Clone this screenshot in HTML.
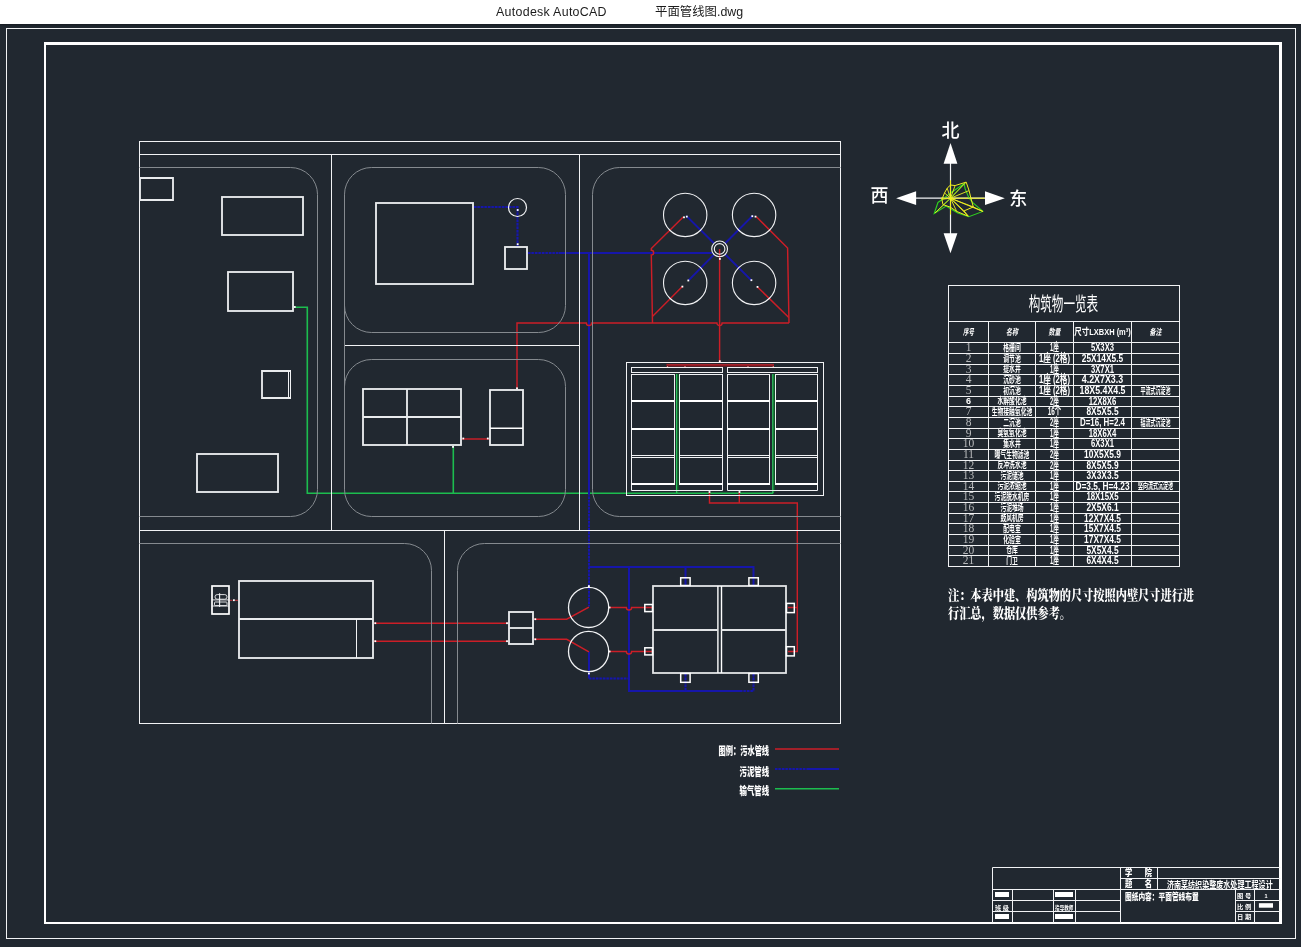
<!DOCTYPE html>
<html lang="zh"><head><meta charset="utf-8"><title>平面管线图.dwg</title>
<style>
html,body{margin:0;padding:0;background:#212830;}
body{width:1301px;height:947px;overflow:hidden;position:relative;font-family:"Liberation Sans","Noto Sans CJK SC",sans-serif;}
#hdr{position:absolute;left:0;top:0;width:1301px;height:24px;background:#fff;box-shadow:0 1px 2px #151a21;color:#1b1b1b;font-size:12.4px;line-height:24px;white-space:nowrap;}
#hdr span{position:absolute;top:0;}
svg{position:absolute;left:0;top:0;display:block;will-change:transform;}
</style></head><body>
<svg width="1301" height="947" viewBox="0 0 1301 947" shape-rendering="geometricPrecision">
<path d="M294,307 H307 V493 H773" stroke="#1cbd4e" stroke-width="1.6" fill="none" transform="translate(0.3,0.3)" />
<path d="M453,446 V493" stroke="#1cbd4e" stroke-width="1.6" fill="none" transform="translate(0.3,0.3)" />
<line x1="676.7" y1="374" x2="676.7" y2="493" stroke="#2cc45c" stroke-width="1.5" />
<line x1="678.1" y1="374" x2="678.1" y2="492" stroke="#0c5a24" stroke-width="1.2" />
<line x1="772.9" y1="374" x2="772.9" y2="493" stroke="#2cc45c" stroke-width="1.5" />
<line x1="774.3" y1="374" x2="774.3" y2="492" stroke="#0c5a24" stroke-width="1.2" />
<path d="M474,207 H517.5 V246" stroke="#1616aa" stroke-width="2" fill="none" stroke-opacity="0.28"/>
<path d="M474,207 H517.5 V246" stroke="#1616aa" stroke-width="2" fill="none" stroke-dasharray="2.4,1.1"/>
<path d="M528,253 H559" stroke="#1616aa" stroke-width="2" fill="none" stroke-opacity="0.28"/>
<path d="M528,253 H559" stroke="#1616aa" stroke-width="2" fill="none" stroke-dasharray="2.4,1.1"/>
<path d="M559,253 H712.5" stroke="#1616aa" stroke-width="2" fill="none"/>
<path d="M589,253 V493" stroke="#1616aa" stroke-width="2" fill="none"/>
<path d="M589,493 V606.5" stroke="#1616aa" stroke-width="2" fill="none" stroke-opacity="0.28"/>
<path d="M589,493 V606.5" stroke="#1616aa" stroke-width="2" fill="none" stroke-dasharray="2.4,1.1"/>
<path d="M713.92,243.27 L686.3,215.9" stroke="#1616aa" stroke-width="2" fill="none"/>
<path d="M725.25,243.23 L753,215.4" stroke="#1616aa" stroke-width="2" fill="none"/>
<path d="M713.98,254.59 L688.8,280.1" stroke="#1616aa" stroke-width="2" fill="none"/>
<path d="M725.29,254.52 L751.2,280.1" stroke="#1616aa" stroke-width="2" fill="none"/>
<path d="M589,567 H753.5 V585" stroke="#1616aa" stroke-width="2" fill="none"/>
<path d="M685.5,567 V585" stroke="#1616aa" stroke-width="2" fill="none"/>
<path d="M629,567 V691 H740" stroke="#1616aa" stroke-width="2" fill="none"/>
<path d="M740,691 H753.5 V674" stroke="#1616aa" stroke-width="2" fill="none" stroke-opacity="0.28"/>
<path d="M740,691 H753.5 V674" stroke="#1616aa" stroke-width="2" fill="none" stroke-dasharray="2.4,1.1"/>
<path d="M685.5,674 V691" stroke="#1616aa" stroke-width="2" fill="none" stroke-opacity="0.28"/>
<path d="M685.5,674 V691" stroke="#1616aa" stroke-width="2" fill="none" stroke-dasharray="2.4,1.1"/>
<path d="M589,651.8 V678.5" stroke="#1616aa" stroke-width="2" fill="none"/>
<path d="M589,678.5 H629" stroke="#1616aa" stroke-width="2" fill="none" stroke-opacity="0.28"/>
<path d="M589,678.5 H629" stroke="#1616aa" stroke-width="2" fill="none" stroke-dasharray="2.4,1.1"/>
<path d="M517,389 V323 H586.4 A2.6,2.6 0 0 0 591.6,323 H716.9 A2.6,2.6 0 0 0 722.1,323 H789" stroke="#cc1e27" stroke-width="1.45" fill="none" stroke-linejoin="miter" />
<path d="M683.2,216.9 L651.3,248.6 V250.3 A2.3,2.3 0 0 1 651.3,255 L652.5,323" stroke="#cc1e27" stroke-width="1.45" fill="none" stroke-linejoin="miter" />
<path d="M756.1,216.5 L787.6,248 L789,323" stroke="#cc1e27" stroke-width="1.45" fill="none" stroke-linejoin="miter" />
<path d="M682.6,286.3 L652.4,316.5" stroke="#cc1e27" stroke-width="1.45" fill="none" stroke-linejoin="miter" />
<path d="M757.4,286.9 L788.8,317.5" stroke="#cc1e27" stroke-width="1.45" fill="none" stroke-linejoin="miter" />
<path d="M719.6,249 V362" stroke="#cc1e27" stroke-width="1.45" fill="none" stroke-linejoin="miter" />
<path d="M462,439 H489" stroke="#cc1e27" stroke-width="1.45" fill="none" stroke-linejoin="miter" />
<line x1="666.5" y1="365.3" x2="774" y2="365.3" stroke="#8e1a22" stroke-width="2.4" />
<line x1="666.5" y1="364.4" x2="774" y2="364.4" stroke="#b02a32" stroke-width="0.8" />
<line x1="667.5" y1="366" x2="667.5" y2="367.6" stroke="#d88" stroke-width="1.2" />
<line x1="685" y1="366" x2="685" y2="367.6" stroke="#d88" stroke-width="1.2" />
<line x1="748" y1="366" x2="748" y2="367.6" stroke="#d88" stroke-width="1.2" />
<line x1="773.3" y1="366" x2="773.3" y2="367.6" stroke="#d88" stroke-width="1.2" />
<path d="M709.5,492 V503 H797.3 V651.5 H788" stroke="#cc1e27" stroke-width="1.45" fill="none" stroke-linejoin="miter" />
<path d="M739.3,492 V503" stroke="#cc1e27" stroke-width="1.45" fill="none" stroke-linejoin="miter" />
<path d="M788,607.5 H797.3" stroke="#cc1e27" stroke-width="1.45" fill="none" stroke-linejoin="miter" />
<line x1="229.5" y1="600.4" x2="238" y2="600.4" stroke="#a0343c" stroke-width="1.4" stroke-dasharray="3,2.5"/>
<path d="M374,623.2 H508" stroke="#cc1e27" stroke-width="1.45" fill="none" stroke-linejoin="miter" />
<path d="M374,641.2 H508" stroke="#cc1e27" stroke-width="1.45" fill="none" stroke-linejoin="miter" />
<path d="M534,619.2 H566.7 L588.9,607.2" stroke="#cc1e27" stroke-width="1.45" fill="none" stroke-linejoin="miter" />
<path d="M534,639.3 H566.7 L588.9,651.8" stroke="#cc1e27" stroke-width="1.45" fill="none" stroke-linejoin="miter" />
<path d="M609,607.5 H626.4 A2.6,2.6 0 0 0 631.6,607.5 H652" stroke="#cc1e27" stroke-width="1.45" fill="none" stroke-linejoin="miter" />
<path d="M609,651.5 H626.4 A2.6,2.6 0 0 0 631.6,651.5 H652" stroke="#cc1e27" stroke-width="1.45" fill="none" stroke-linejoin="miter" />
<rect x="6.5" y="28.5" width="1289.0" height="910.0" stroke="#f1f2f4" stroke-width="1" fill="none" />
<line x1="44" y1="43.5" x2="1282" y2="43.5" stroke="#ffffff" stroke-width="3" />
<line x1="1280.5" y1="42" x2="1280.5" y2="924" stroke="#ffffff" stroke-width="3" />
<line x1="45" y1="42" x2="45" y2="924" stroke="#ffffff" stroke-width="2" />
<line x1="44" y1="923" x2="1282" y2="923" stroke="#ffffff" stroke-width="2" />
<rect x="139.5" y="141.5" width="701.0" height="582.0" stroke="#f1f2f4" stroke-width="1" fill="none" />
<line x1="139.5" y1="154.5" x2="840.5" y2="154.5" stroke="#f1f2f4" stroke-width="1" />
<line x1="139.5" y1="530.5" x2="840.5" y2="530.5" stroke="#f1f2f4" stroke-width="1" />
<line x1="331.5" y1="154.5" x2="331.5" y2="530.5" stroke="#f1f2f4" stroke-width="1" />
<line x1="579.5" y1="154.5" x2="579.5" y2="530.5" stroke="#f1f2f4" stroke-width="1" />
<line x1="344.5" y1="345.5" x2="579.5" y2="345.5" stroke="#f1f2f4" stroke-width="1" />
<line x1="444.5" y1="530.5" x2="444.5" y2="723.5" stroke="#f1f2f4" stroke-width="1" />
<path d="M139.5,167.5 H290.5 A27,27 0 0 1 317.5,194.5 V489.5 A27,27 0 0 1 290.5,516.5 H139.5" stroke="#858a8f" stroke-width="1" fill="none" />
<path d="M371.5,167.5 H538.5 A27,27 0 0 1 565.5,194.5 V305.5 A27,27 0 0 1 538.5,332.5 H371.5 A27,27 0 0 1 344.5,305.5 V194.5 A27,27 0 0 1 371.5,167.5 Z" stroke="#858a8f" stroke-width="1" fill="none" />
<path d="M371.5,359.5 H538.5 A27,27 0 0 1 565.5,386.5 V489.5 A27,27 0 0 1 538.5,516.5 H371.5 A27,27 0 0 1 344.5,489.5 V386.5 A27,27 0 0 1 371.5,359.5 Z" stroke="#858a8f" stroke-width="1" fill="none" />
<line x1="344.5" y1="194.5" x2="344.5" y2="489.5" stroke="#858a8f" stroke-width="1" />
<path d="M840.5,167.5 H619.5 A27,27 0 0 0 592.5,194.5 V489.5 A27,27 0 0 0 619.5,516.5 H840.5" stroke="#858a8f" stroke-width="1" fill="none" />
<path d="M139.5,543.5 H404.5 A27,27 0 0 1 431.5,570.5 V723.5" stroke="#858a8f" stroke-width="1" fill="none" />
<path d="M840.5,543.5 H484.5 A27,27 0 0 0 457.5,570.5 V723.5" stroke="#858a8f" stroke-width="1" fill="none" />
<path d="M140,178 H173 V200 H140 Z" stroke="#e9ebed" stroke-width="1.85" fill="none" />
<rect x="222" y="197" width="81" height="38" stroke="#e9ebed" stroke-width="1.85" fill="none" />
<rect x="228" y="272" width="65" height="39" stroke="#e9ebed" stroke-width="1.85" fill="none" />
<path d="M290,371 H262 V398 H290" stroke="#e9ebed" stroke-width="1.85" fill="none" />
<line x1="290.5" y1="370" x2="290.5" y2="399" stroke="#f1f2f4" stroke-width="1" />
<line x1="288.5" y1="371" x2="288.5" y2="398" stroke="#f1f2f4" stroke-width="1" />
<rect x="197" y="454" width="81" height="38" stroke="#e9ebed" stroke-width="1.85" fill="none" />
<rect x="376" y="203" width="97" height="81" stroke="#e9ebed" stroke-width="1.85" fill="none" />
<circle cx="517.5" cy="207.5" r="9" stroke="#f1f2f4" stroke-width="1.2" fill="none"/>
<rect x="505" y="247" width="22" height="22" stroke="#e9ebed" stroke-width="1.85" fill="none" />
<rect x="363" y="389" width="98" height="56" stroke="#e9ebed" stroke-width="1.85" fill="none" />
<line x1="407" y1="389" x2="407" y2="445" stroke="#e9ebed" stroke-width="1.85" />
<line x1="363" y1="417" x2="461" y2="417" stroke="#e9ebed" stroke-width="1.85" />
<rect x="490" y="390" width="33" height="55" stroke="#e9ebed" stroke-width="1.85" fill="none" />
<line x1="490" y1="428.2" x2="523" y2="428.2" stroke="#ffffff" stroke-width="1.5" />
<circle cx="685.2" cy="214.9" r="21.7" stroke="#f1f2f4" stroke-width="1.1" fill="none"/>
<circle cx="685.2" cy="282.9" r="21.7" stroke="#f1f2f4" stroke-width="1.1" fill="none"/>
<circle cx="754.1" cy="214.9" r="21.7" stroke="#f1f2f4" stroke-width="1.1" fill="none"/>
<circle cx="754.1" cy="282.9" r="21.7" stroke="#f1f2f4" stroke-width="1.1" fill="none"/>
<rect x="626.5" y="362.5" width="197.0" height="133.0" stroke="#f1f2f4" stroke-width="1" fill="none" />
<rect x="631.5" y="367.5" width="91.0" height="5.0" stroke="#f1f2f4" stroke-width="1" fill="none" />
<path d="M631.5,484 V490.5 H722.5 V484" stroke="#f1f2f4" stroke-width="1" fill="none" />
<rect x="631.5" y="374.5" width="43.0" height="109.5" stroke="#f1f2f4" stroke-width="1" fill="none" />
<line x1="631.5" y1="401" x2="674.5" y2="401" stroke="#ffffff" stroke-width="2" />
<line x1="631.5" y1="429" x2="674.5" y2="429" stroke="#ffffff" stroke-width="2" />
<line x1="631.5" y1="455.5" x2="674.5" y2="455.5" stroke="#f1f2f4" stroke-width="1" />
<line x1="631.5" y1="457.5" x2="674.5" y2="457.5" stroke="#f1f2f4" stroke-width="1" />
<line x1="631.0" y1="484" x2="675.0" y2="484" stroke="#ffffff" stroke-width="2" />
<rect x="679.5" y="374.5" width="43.0" height="109.5" stroke="#f1f2f4" stroke-width="1" fill="none" />
<line x1="679.5" y1="401" x2="722.5" y2="401" stroke="#ffffff" stroke-width="2" />
<line x1="679.5" y1="429" x2="722.5" y2="429" stroke="#ffffff" stroke-width="2" />
<line x1="679.5" y1="455.5" x2="722.5" y2="455.5" stroke="#f1f2f4" stroke-width="1" />
<line x1="679.5" y1="457.5" x2="722.5" y2="457.5" stroke="#f1f2f4" stroke-width="1" />
<line x1="679.0" y1="484" x2="723.0" y2="484" stroke="#ffffff" stroke-width="2" />
<rect x="727.5" y="367.5" width="90.0" height="5.0" stroke="#f1f2f4" stroke-width="1" fill="none" />
<path d="M727.5,484 V490.5 H817.5 V484" stroke="#f1f2f4" stroke-width="1" fill="none" />
<rect x="727.5" y="374.5" width="42.0" height="109.5" stroke="#f1f2f4" stroke-width="1" fill="none" />
<line x1="727.5" y1="401" x2="769.5" y2="401" stroke="#ffffff" stroke-width="2" />
<line x1="727.5" y1="429" x2="769.5" y2="429" stroke="#ffffff" stroke-width="2" />
<line x1="727.5" y1="455.5" x2="769.5" y2="455.5" stroke="#f1f2f4" stroke-width="1" />
<line x1="727.5" y1="457.5" x2="769.5" y2="457.5" stroke="#f1f2f4" stroke-width="1" />
<line x1="727.0" y1="484" x2="770.0" y2="484" stroke="#ffffff" stroke-width="2" />
<rect x="775.5" y="374.5" width="42.0" height="109.5" stroke="#f1f2f4" stroke-width="1" fill="none" />
<line x1="775.5" y1="401" x2="817.5" y2="401" stroke="#ffffff" stroke-width="2" />
<line x1="775.5" y1="429" x2="817.5" y2="429" stroke="#ffffff" stroke-width="2" />
<line x1="775.5" y1="455.5" x2="817.5" y2="455.5" stroke="#f1f2f4" stroke-width="1" />
<line x1="775.5" y1="457.5" x2="817.5" y2="457.5" stroke="#f1f2f4" stroke-width="1" />
<line x1="775.0" y1="484" x2="818.0" y2="484" stroke="#ffffff" stroke-width="2" />
<rect x="239" y="581" width="134" height="77" stroke="#e9ebed" stroke-width="1.85" fill="none" />
<line x1="239" y1="619" x2="373" y2="619" stroke="#e9ebed" stroke-width="1.85" />
<line x1="356.5" y1="619" x2="356.5" y2="658" stroke="#f1f2f4" stroke-width="1" />
<rect x="212" y="586" width="17" height="28" stroke="#ffffff" stroke-width="1.7" fill="none" />
<rect x="215" y="594.6" width="12" height="4.6" stroke="#f1f2f4" stroke-width="0.9" fill="none" rx="2.2"/>
<rect x="214.5" y="602" width="12.5" height="3.6" stroke="#f1f2f4" stroke-width="0.9" fill="none" rx="0.8"/>
<line x1="212" y1="599.9" x2="229" y2="599.9" stroke="#f1f2f4" stroke-width="0.9" />
<line x1="212" y1="606" x2="229" y2="606" stroke="#f1f2f4" stroke-width="0.9" />
<line x1="219.6" y1="593.3" x2="219.6" y2="607" stroke="#f1f2f4" stroke-width="1.1" />
<rect x="509" y="612" width="24" height="32" stroke="#e9ebed" stroke-width="1.85" fill="none" />
<line x1="509" y1="628" x2="533" y2="628" stroke="#e9ebed" stroke-width="1.85" />
<circle cx="588.6" cy="607.4" r="20.1" stroke="#f1f2f4" stroke-width="1.3" fill="none"/>
<circle cx="588.6" cy="651.5" r="20.1" stroke="#f1f2f4" stroke-width="1.3" fill="none"/>
<rect x="653" y="586" width="133" height="87" stroke="#e2e4e6" stroke-width="1.8" fill="none" />
<line x1="717.9" y1="586" x2="717.9" y2="673" stroke="#ffffff" stroke-width="1.4" />
<line x1="721.5" y1="586" x2="721.5" y2="673" stroke="#ffffff" stroke-width="1.4" />
<line x1="653" y1="630" x2="717.9" y2="630" stroke="#e2e4e6" stroke-width="1.8" />
<line x1="721.5" y1="630" x2="786" y2="630" stroke="#e2e4e6" stroke-width="1.8" />
<rect x="680.6999999999999" y="577.8" width="9.4" height="7.7" stroke="#ffffff" stroke-width="1.5" fill="none" />
<rect x="680.6999999999999" y="673.5" width="9.4" height="8.8" stroke="#ffffff" stroke-width="1.5" fill="none" />
<rect x="748.9" y="577.8" width="9.4" height="7.7" stroke="#ffffff" stroke-width="1.5" fill="none" />
<rect x="748.9" y="673.5" width="9.4" height="8.8" stroke="#ffffff" stroke-width="1.5" fill="none" />
<rect x="644.8" y="604.5" width="7.7" height="7.1" stroke="#ffffff" stroke-width="1.5" fill="none" />
<rect x="786.5" y="603.4" width="7.8" height="9.2" stroke="#ffffff" stroke-width="1.5" fill="none" />
<rect x="644.8" y="647.8" width="7.7" height="7.1" stroke="#ffffff" stroke-width="1.5" fill="none" />
<rect x="786.5" y="646.6999999999999" width="7.8" height="9.2" stroke="#ffffff" stroke-width="1.5" fill="none" />
<line x1="950.5" y1="160" x2="950.5" y2="236" stroke="#f1f2f4" stroke-width="1.2" />
<line x1="914" y1="198.2" x2="987" y2="198.2" stroke="#f1f2f4" stroke-width="1.2" />
<polygon points="950.5,143.1 943.6,163.8 957.4,163.8" fill="#ffffff" stroke="none" stroke-width="0"/>
<polygon points="950.5,253.2 943.6,233.2 957.4,233.2" fill="#ffffff" stroke="none" stroke-width="0"/>
<polygon points="896.1,198.2 916.1,191.3 916.1,205.1" fill="#ffffff" stroke="none" stroke-width="0"/>
<polygon points="1004.8,198.2 985,191.3 985,205.1" fill="#ffffff" stroke="none" stroke-width="0"/>
<path d="M934.24,213.54 L937.94,202.46 L941.9,199.82 L950.5,192.95 L964.07,183.71 L965.13,188.73 L968.82,197.7 L972.52,202.46 L982.81,211.43 L968.82,216.71 L957.73,213.01 L950.5,208.79 L946.12,206.15 Z" stroke="#30d020" stroke-width="1.1" fill="none" />
<line x1="934.24" y1="213.54" x2="950.5" y2="198.23" stroke="#30d020" stroke-width="1.0" />
<line x1="950.5" y1="198.23" x2="964.07" y2="183.71" stroke="#30d020" stroke-width="1.0" />
<path d="M950.5,185.03 L955.1,185.56 L966.18,182.13 L969.09,190.58 L970.93,198.23 L973.31,206.94 L964.07,210.9 L968.29,216.18 L956.68,211.43 L950.5,207.21 L942.95,204.57 L941.9,199.29 L944.54,192.95 L947.18,188.2 Z" stroke="#f0f020" stroke-width="1.0" fill="none" />
<line x1="950.5" y1="198.23" x2="966.18" y2="182.13" stroke="#f0f020" stroke-width="0.9" />
<line x1="950.5" y1="198.23" x2="969.09" y2="190.58" stroke="#f0f020" stroke-width="0.9" />
<line x1="950.5" y1="198.23" x2="973.31" y2="206.94" stroke="#f0f020" stroke-width="0.9" />
<line x1="950.5" y1="198.23" x2="982.81" y2="211.43" stroke="#f0f020" stroke-width="0.9" />
<line x1="950.5" y1="198.23" x2="968.29" y2="216.18" stroke="#f0f020" stroke-width="0.9" />
<line x1="950.5" y1="198.23" x2="956.68" y2="211.43" stroke="#f0f020" stroke-width="0.9" />
<line x1="950.5" y1="198.23" x2="935.03" y2="213.01" stroke="#f0f020" stroke-width="0.9" />
<line x1="950.5" y1="198.23" x2="941.9" y2="199.29" stroke="#f0f020" stroke-width="0.9" />
<line x1="950.5" y1="198.23" x2="944.54" y2="192.95" stroke="#f0f020" stroke-width="0.9" />
<line x1="950.5" y1="198.23" x2="947.18" y2="188.2" stroke="#f0f020" stroke-width="0.9" />
<line x1="950.5" y1="198.23" x2="955.1" y2="185.56" stroke="#f0f020" stroke-width="0.9" />
<line x1="950.5" y1="198.23" x2="964.07" y2="210.9" stroke="#f0f020" stroke-width="0.9" />
<line x1="940.84" y1="198.23" x2="984.66" y2="198.23" stroke="#f0f020" stroke-width="1.0" />
<line x1="950.5" y1="180.28" x2="950.5" y2="214.6" stroke="#f0f020" stroke-width="1.0" />
<line x1="973.31" y1="206.94" x2="982.81" y2="211.43" stroke="#f0f020" stroke-width="1.0" />
<text x="950.5" y="137.38" font-size="18" font-weight="500" font-family='"Liberation Sans","Noto Sans CJK SC",sans-serif' fill="#ffffff" text-anchor="middle" >北</text>
<text x="879.6" y="202.38" font-size="18" font-weight="500" font-family='"Liberation Sans","Noto Sans CJK SC",sans-serif' fill="#ffffff" text-anchor="middle" >西</text>
<text x="1018.2" y="204.78" font-size="18" font-weight="500" font-family='"Liberation Sans","Noto Sans CJK SC",sans-serif' fill="#ffffff" text-anchor="middle" >东</text>
<rect x="948.5" y="285.5" width="231.0" height="281.0" stroke="#f1f2f4" stroke-width="1" fill="none" />
<line x1="948.5" y1="321.5" x2="1179.5" y2="321.5" stroke="#f1f2f4" stroke-width="1" />
<line x1="948.5" y1="342.5" x2="1179.5" y2="342.5" stroke="#f1f2f4" stroke-width="1" />
<line x1="948.5" y1="353.5" x2="1179.5" y2="353.5" stroke="#f1f2f4" stroke-width="1" />
<line x1="948.5" y1="364.5" x2="1179.5" y2="364.5" stroke="#f1f2f4" stroke-width="1" />
<line x1="948.5" y1="374.5" x2="1179.5" y2="374.5" stroke="#f1f2f4" stroke-width="1" />
<line x1="948.5" y1="385.5" x2="1179.5" y2="385.5" stroke="#f1f2f4" stroke-width="1" />
<line x1="948.5" y1="396.5" x2="1179.5" y2="396.5" stroke="#f1f2f4" stroke-width="1" />
<line x1="948.5" y1="406.5" x2="1179.5" y2="406.5" stroke="#f1f2f4" stroke-width="1" />
<line x1="948.5" y1="417.5" x2="1179.5" y2="417.5" stroke="#f1f2f4" stroke-width="1" />
<line x1="948.5" y1="428.5" x2="1179.5" y2="428.5" stroke="#f1f2f4" stroke-width="1" />
<line x1="948.5" y1="438.5" x2="1179.5" y2="438.5" stroke="#f1f2f4" stroke-width="1" />
<line x1="948.5" y1="449.5" x2="1179.5" y2="449.5" stroke="#f1f2f4" stroke-width="1" />
<line x1="948.5" y1="460.5" x2="1179.5" y2="460.5" stroke="#f1f2f4" stroke-width="1" />
<line x1="948.5" y1="470.5" x2="1179.5" y2="470.5" stroke="#f1f2f4" stroke-width="1" />
<line x1="948.5" y1="481.5" x2="1179.5" y2="481.5" stroke="#f1f2f4" stroke-width="1" />
<line x1="948.5" y1="491.5" x2="1179.5" y2="491.5" stroke="#f1f2f4" stroke-width="1" />
<line x1="948.5" y1="502.5" x2="1179.5" y2="502.5" stroke="#f1f2f4" stroke-width="1" />
<line x1="948.5" y1="513.5" x2="1179.5" y2="513.5" stroke="#f1f2f4" stroke-width="1" />
<line x1="948.5" y1="523.5" x2="1179.5" y2="523.5" stroke="#f1f2f4" stroke-width="1" />
<line x1="948.5" y1="534.5" x2="1179.5" y2="534.5" stroke="#f1f2f4" stroke-width="1" />
<line x1="948.5" y1="545.5" x2="1179.5" y2="545.5" stroke="#f1f2f4" stroke-width="1" />
<line x1="948.5" y1="555.5" x2="1179.5" y2="555.5" stroke="#f1f2f4" stroke-width="1" />
<line x1="988.5" y1="321.5" x2="988.5" y2="566.5" stroke="#f1f2f4" stroke-width="1" />
<line x1="1035.5" y1="321.5" x2="1035.5" y2="566.5" stroke="#f1f2f4" stroke-width="1" />
<line x1="1073.5" y1="321.5" x2="1073.5" y2="566.5" stroke="#f1f2f4" stroke-width="1" />
<line x1="1131.5" y1="321.5" x2="1131.5" y2="566.5" stroke="#f1f2f4" stroke-width="1" />
<text x="1063.4" y="310.92" font-size="19.5" font-weight="400" font-family='"Liberation Sans","Noto Sans CJK SC",sans-serif' fill="#ffffff" text-anchor="middle" textLength="69.5" lengthAdjust="spacingAndGlyphs" >构筑物一览表</text>
<text x="968.5" y="335.1" font-size="8.6" font-weight="bold" font-family='"Liberation Sans","Noto Sans CJK SC",sans-serif' fill="#ffffff" text-anchor="middle" textLength="11" lengthAdjust="spacingAndGlyphs" font-style="italic">序号</text>
<text x="1012.0" y="335.1" font-size="8.6" font-weight="bold" font-family='"Liberation Sans","Noto Sans CJK SC",sans-serif' fill="#ffffff" text-anchor="middle" textLength="12" lengthAdjust="spacingAndGlyphs" font-style="italic">名称</text>
<text x="1054.5" y="335.1" font-size="8.6" font-weight="bold" font-family='"Liberation Sans","Noto Sans CJK SC",sans-serif' fill="#ffffff" text-anchor="middle" textLength="12" lengthAdjust="spacingAndGlyphs" font-style="italic">数量</text>
<text x="1102.5" y="335.42" font-size="9.5" font-weight="bold" font-family='"Liberation Sans","Noto Sans CJK SC",sans-serif' fill="#ffffff" text-anchor="middle" textLength="56.5" lengthAdjust="spacingAndGlyphs" >尺寸LXBXH (m³)</text>
<text x="1155.5" y="335.1" font-size="8.6" font-weight="bold" font-family='"Liberation Sans","Noto Sans CJK SC",sans-serif' fill="#ffffff" text-anchor="middle" textLength="12" lengthAdjust="spacingAndGlyphs" font-style="italic">备注</text>
<text x="968.5" y="351.1" font-size="11.5" font-weight="normal" font-family='"Liberation Serif","Noto Serif CJK SC",serif' fill="#b8babc" text-anchor="middle" >1</text>
<text x="1012.0" y="350.74" font-size="9" font-weight="bold" font-family='"Liberation Sans","Noto Sans CJK SC",sans-serif' fill="#ffffff" text-anchor="middle" textLength="17.4" lengthAdjust="spacingAndGlyphs" >格栅间</text>
<text x="1054.5" y="351.39" font-size="10.8" font-weight="bold" font-family='"Liberation Sans","Noto Sans CJK SC",sans-serif' fill="#ffffff" text-anchor="middle" textLength="8.8" lengthAdjust="spacingAndGlyphs" >1座</text>
<text x="1102.5" y="351.1" font-size="10" font-weight="bold" font-family='"Liberation Sans","Noto Sans CJK SC",sans-serif' fill="#ffffff" text-anchor="middle" textLength="23.0" lengthAdjust="spacingAndGlyphs" >5X3X3</text>
<text x="968.5" y="362.1" font-size="11.5" font-weight="normal" font-family='"Liberation Serif","Noto Serif CJK SC",serif' fill="#b8babc" text-anchor="middle" >2</text>
<text x="1012.0" y="361.74" font-size="9" font-weight="bold" font-family='"Liberation Sans","Noto Sans CJK SC",sans-serif' fill="#ffffff" text-anchor="middle" textLength="17.4" lengthAdjust="spacingAndGlyphs" >调节池</text>
<text x="1054.5" y="362.39" font-size="10.8" font-weight="bold" font-family='"Liberation Sans","Noto Sans CJK SC",sans-serif' fill="#ffffff" text-anchor="middle" textLength="31" lengthAdjust="spacingAndGlyphs" >1座 (2格)</text>
<text x="1102.5" y="362.1" font-size="10" font-weight="bold" font-family='"Liberation Sans","Noto Sans CJK SC",sans-serif' fill="#ffffff" text-anchor="middle" textLength="41.4" lengthAdjust="spacingAndGlyphs" >25X14X5.5</text>
<text x="968.5" y="372.6" font-size="11.5" font-weight="normal" font-family='"Liberation Serif","Noto Serif CJK SC",serif' fill="#b8babc" text-anchor="middle" >3</text>
<text x="1012.0" y="372.24" font-size="9" font-weight="bold" font-family='"Liberation Sans","Noto Sans CJK SC",sans-serif' fill="#ffffff" text-anchor="middle" textLength="17.4" lengthAdjust="spacingAndGlyphs" >提水井</text>
<text x="1054.5" y="372.89" font-size="10.8" font-weight="bold" font-family='"Liberation Sans","Noto Sans CJK SC",sans-serif' fill="#ffffff" text-anchor="middle" textLength="8.8" lengthAdjust="spacingAndGlyphs" >1座</text>
<text x="1102.5" y="372.6" font-size="10" font-weight="bold" font-family='"Liberation Sans","Noto Sans CJK SC",sans-serif' fill="#ffffff" text-anchor="middle" textLength="23.0" lengthAdjust="spacingAndGlyphs" >3X7X1</text>
<text x="968.5" y="383.1" font-size="11.5" font-weight="normal" font-family='"Liberation Serif","Noto Serif CJK SC",serif' fill="#b8babc" text-anchor="middle" >4</text>
<text x="1012.0" y="382.74" font-size="9" font-weight="bold" font-family='"Liberation Sans","Noto Sans CJK SC",sans-serif' fill="#ffffff" text-anchor="middle" textLength="17.4" lengthAdjust="spacingAndGlyphs" >沉砂池</text>
<text x="1054.5" y="383.39" font-size="10.8" font-weight="bold" font-family='"Liberation Sans","Noto Sans CJK SC",sans-serif' fill="#ffffff" text-anchor="middle" textLength="31" lengthAdjust="spacingAndGlyphs" >1座 (2格)</text>
<text x="1102.5" y="383.1" font-size="10" font-weight="bold" font-family='"Liberation Sans","Noto Sans CJK SC",sans-serif' fill="#ffffff" text-anchor="middle" textLength="41.4" lengthAdjust="spacingAndGlyphs" >4.2X7X3.3</text>
<text x="968.5" y="394.1" font-size="11.5" font-weight="normal" font-family='"Liberation Serif","Noto Serif CJK SC",serif' fill="#b8babc" text-anchor="middle" >5</text>
<text x="1012.0" y="393.74" font-size="9" font-weight="bold" font-family='"Liberation Sans","Noto Sans CJK SC",sans-serif' fill="#ffffff" text-anchor="middle" textLength="17.4" lengthAdjust="spacingAndGlyphs" >初沉池</text>
<text x="1054.5" y="394.39" font-size="10.8" font-weight="bold" font-family='"Liberation Sans","Noto Sans CJK SC",sans-serif' fill="#ffffff" text-anchor="middle" textLength="31" lengthAdjust="spacingAndGlyphs" >1座 (2格)</text>
<text x="1102.5" y="394.1" font-size="10" font-weight="bold" font-family='"Liberation Sans","Noto Sans CJK SC",sans-serif' fill="#ffffff" text-anchor="middle" textLength="46.0" lengthAdjust="spacingAndGlyphs" >18X5.4X4.5</text>
<text x="1155.5" y="393.67" font-size="8.8" font-weight="bold" font-family='"Liberation Sans","Noto Sans CJK SC",sans-serif' fill="#ffffff" text-anchor="middle" textLength="30.0" lengthAdjust="spacingAndGlyphs" >平流式沉淀池</text>
<text x="968.5" y="404.24" font-size="9" font-weight="bold" font-family='"Liberation Sans","Noto Sans CJK SC",sans-serif' fill="#ffffff" text-anchor="middle" >6</text>
<text x="1012.0" y="404.24" font-size="9" font-weight="bold" font-family='"Liberation Sans","Noto Sans CJK SC",sans-serif' fill="#ffffff" text-anchor="middle" textLength="29.0" lengthAdjust="spacingAndGlyphs" >水解酸化池</text>
<text x="1054.5" y="404.89" font-size="10.8" font-weight="bold" font-family='"Liberation Sans","Noto Sans CJK SC",sans-serif' fill="#ffffff" text-anchor="middle" textLength="8.8" lengthAdjust="spacingAndGlyphs" >2座</text>
<text x="1102.5" y="404.6" font-size="10" font-weight="bold" font-family='"Liberation Sans","Noto Sans CJK SC",sans-serif' fill="#ffffff" text-anchor="middle" textLength="27.6" lengthAdjust="spacingAndGlyphs" >12X8X6</text>
<text x="968.5" y="415.1" font-size="11.5" font-weight="normal" font-family='"Liberation Serif","Noto Serif CJK SC",serif' fill="#b8babc" text-anchor="middle" >7</text>
<text x="1012.0" y="414.74" font-size="9" font-weight="bold" font-family='"Liberation Sans","Noto Sans CJK SC",sans-serif' fill="#ffffff" text-anchor="middle" textLength="40.6" lengthAdjust="spacingAndGlyphs" >生物接触氧化池</text>
<text x="1054.5" y="415.39" font-size="10.8" font-weight="bold" font-family='"Liberation Sans","Noto Sans CJK SC",sans-serif' fill="#ffffff" text-anchor="middle" textLength="13.5" lengthAdjust="spacingAndGlyphs" >16个</text>
<text x="1102.5" y="415.1" font-size="10" font-weight="bold" font-family='"Liberation Sans","Noto Sans CJK SC",sans-serif' fill="#ffffff" text-anchor="middle" textLength="32.2" lengthAdjust="spacingAndGlyphs" >8X5X5.5</text>
<text x="968.5" y="426.1" font-size="11.5" font-weight="normal" font-family='"Liberation Serif","Noto Serif CJK SC",serif' fill="#b8babc" text-anchor="middle" >8</text>
<text x="1012.0" y="425.74" font-size="9" font-weight="bold" font-family='"Liberation Sans","Noto Sans CJK SC",sans-serif' fill="#ffffff" text-anchor="middle" textLength="17.4" lengthAdjust="spacingAndGlyphs" >二沉池</text>
<text x="1054.5" y="426.39" font-size="10.8" font-weight="bold" font-family='"Liberation Sans","Noto Sans CJK SC",sans-serif' fill="#ffffff" text-anchor="middle" textLength="8.8" lengthAdjust="spacingAndGlyphs" >2座</text>
<text x="1102.5" y="426.1" font-size="10" font-weight="bold" font-family='"Liberation Sans","Noto Sans CJK SC",sans-serif' fill="#ffffff" text-anchor="middle" textLength="45" lengthAdjust="spacingAndGlyphs" >D=16, H=2.4</text>
<text x="1155.5" y="425.67" font-size="8.8" font-weight="bold" font-family='"Liberation Sans","Noto Sans CJK SC",sans-serif' fill="#ffffff" text-anchor="middle" textLength="30.0" lengthAdjust="spacingAndGlyphs" >辐流式沉淀池</text>
<text x="968.5" y="436.6" font-size="11.5" font-weight="normal" font-family='"Liberation Serif","Noto Serif CJK SC",serif' fill="#b8babc" text-anchor="middle" >9</text>
<text x="1012.0" y="436.24" font-size="9" font-weight="bold" font-family='"Liberation Sans","Noto Sans CJK SC",sans-serif' fill="#ffffff" text-anchor="middle" textLength="29.0" lengthAdjust="spacingAndGlyphs" >臭氧氧化池</text>
<text x="1054.5" y="436.89" font-size="10.8" font-weight="bold" font-family='"Liberation Sans","Noto Sans CJK SC",sans-serif' fill="#ffffff" text-anchor="middle" textLength="8.8" lengthAdjust="spacingAndGlyphs" >1座</text>
<text x="1102.5" y="436.6" font-size="10" font-weight="bold" font-family='"Liberation Sans","Noto Sans CJK SC",sans-serif' fill="#ffffff" text-anchor="middle" textLength="27.6" lengthAdjust="spacingAndGlyphs" >18X6X4</text>
<text x="968.5" y="447.1" font-size="11.5" font-weight="normal" font-family='"Liberation Serif","Noto Serif CJK SC",serif' fill="#b8babc" text-anchor="middle" >10</text>
<text x="1012.0" y="446.74" font-size="9" font-weight="bold" font-family='"Liberation Sans","Noto Sans CJK SC",sans-serif' fill="#ffffff" text-anchor="middle" textLength="17.4" lengthAdjust="spacingAndGlyphs" >集水井</text>
<text x="1054.5" y="447.39" font-size="10.8" font-weight="bold" font-family='"Liberation Sans","Noto Sans CJK SC",sans-serif' fill="#ffffff" text-anchor="middle" textLength="8.8" lengthAdjust="spacingAndGlyphs" >1座</text>
<text x="1102.5" y="447.1" font-size="10" font-weight="bold" font-family='"Liberation Sans","Noto Sans CJK SC",sans-serif' fill="#ffffff" text-anchor="middle" textLength="23.0" lengthAdjust="spacingAndGlyphs" >6X3X1</text>
<text x="968.5" y="458.1" font-size="11.5" font-weight="normal" font-family='"Liberation Serif","Noto Serif CJK SC",serif' fill="#b8babc" text-anchor="middle" >11</text>
<text x="1012.0" y="457.74" font-size="9" font-weight="bold" font-family='"Liberation Sans","Noto Sans CJK SC",sans-serif' fill="#ffffff" text-anchor="middle" textLength="34.8" lengthAdjust="spacingAndGlyphs" >曝气生物滤池</text>
<text x="1054.5" y="458.39" font-size="10.8" font-weight="bold" font-family='"Liberation Sans","Noto Sans CJK SC",sans-serif' fill="#ffffff" text-anchor="middle" textLength="8.8" lengthAdjust="spacingAndGlyphs" >2座</text>
<text x="1102.5" y="458.1" font-size="10" font-weight="bold" font-family='"Liberation Sans","Noto Sans CJK SC",sans-serif' fill="#ffffff" text-anchor="middle" textLength="36.8" lengthAdjust="spacingAndGlyphs" >10X5X5.9</text>
<text x="968.5" y="468.6" font-size="11.5" font-weight="normal" font-family='"Liberation Serif","Noto Serif CJK SC",serif' fill="#b8babc" text-anchor="middle" >12</text>
<text x="1012.0" y="468.24" font-size="9" font-weight="bold" font-family='"Liberation Sans","Noto Sans CJK SC",sans-serif' fill="#ffffff" text-anchor="middle" textLength="29.0" lengthAdjust="spacingAndGlyphs" >反冲洗水池</text>
<text x="1054.5" y="468.89" font-size="10.8" font-weight="bold" font-family='"Liberation Sans","Noto Sans CJK SC",sans-serif' fill="#ffffff" text-anchor="middle" textLength="8.8" lengthAdjust="spacingAndGlyphs" >2座</text>
<text x="1102.5" y="468.6" font-size="10" font-weight="bold" font-family='"Liberation Sans","Noto Sans CJK SC",sans-serif' fill="#ffffff" text-anchor="middle" textLength="32.2" lengthAdjust="spacingAndGlyphs" >8X5X5.9</text>
<text x="968.5" y="479.1" font-size="11.5" font-weight="normal" font-family='"Liberation Serif","Noto Serif CJK SC",serif' fill="#b8babc" text-anchor="middle" >13</text>
<text x="1012.0" y="478.74" font-size="9" font-weight="bold" font-family='"Liberation Sans","Noto Sans CJK SC",sans-serif' fill="#ffffff" text-anchor="middle" textLength="23.2" lengthAdjust="spacingAndGlyphs" >污泥储池</text>
<text x="1054.5" y="479.39" font-size="10.8" font-weight="bold" font-family='"Liberation Sans","Noto Sans CJK SC",sans-serif' fill="#ffffff" text-anchor="middle" textLength="8.8" lengthAdjust="spacingAndGlyphs" >1座</text>
<text x="1102.5" y="479.1" font-size="10" font-weight="bold" font-family='"Liberation Sans","Noto Sans CJK SC",sans-serif' fill="#ffffff" text-anchor="middle" textLength="32.2" lengthAdjust="spacingAndGlyphs" >3X3X3.5</text>
<text x="968.5" y="489.6" font-size="11.5" font-weight="normal" font-family='"Liberation Serif","Noto Serif CJK SC",serif' fill="#b8babc" text-anchor="middle" >14</text>
<text x="1012.0" y="489.24" font-size="9" font-weight="bold" font-family='"Liberation Sans","Noto Sans CJK SC",sans-serif' fill="#ffffff" text-anchor="middle" textLength="29.0" lengthAdjust="spacingAndGlyphs" >污泥浓缩池</text>
<text x="1054.5" y="489.89" font-size="10.8" font-weight="bold" font-family='"Liberation Sans","Noto Sans CJK SC",sans-serif' fill="#ffffff" text-anchor="middle" textLength="8.8" lengthAdjust="spacingAndGlyphs" >1座</text>
<text x="1102.5" y="489.6" font-size="10" font-weight="bold" font-family='"Liberation Sans","Noto Sans CJK SC",sans-serif' fill="#ffffff" text-anchor="middle" textLength="54" lengthAdjust="spacingAndGlyphs" >D=3.5, H=4.23</text>
<text x="1155.5" y="489.17" font-size="8.8" font-weight="bold" font-family='"Liberation Sans","Noto Sans CJK SC",sans-serif' fill="#ffffff" text-anchor="middle" textLength="35.0" lengthAdjust="spacingAndGlyphs" >竖向流式沉淀池</text>
<text x="968.5" y="500.1" font-size="11.5" font-weight="normal" font-family='"Liberation Serif","Noto Serif CJK SC",serif' fill="#b8babc" text-anchor="middle" >15</text>
<text x="1012.0" y="499.74" font-size="9" font-weight="bold" font-family='"Liberation Sans","Noto Sans CJK SC",sans-serif' fill="#ffffff" text-anchor="middle" textLength="34.8" lengthAdjust="spacingAndGlyphs" >污泥脱水机房</text>
<text x="1054.5" y="500.39" font-size="10.8" font-weight="bold" font-family='"Liberation Sans","Noto Sans CJK SC",sans-serif' fill="#ffffff" text-anchor="middle" textLength="8.8" lengthAdjust="spacingAndGlyphs" >1座</text>
<text x="1102.5" y="500.1" font-size="10" font-weight="bold" font-family='"Liberation Sans","Noto Sans CJK SC",sans-serif' fill="#ffffff" text-anchor="middle" textLength="32.2" lengthAdjust="spacingAndGlyphs" >18X15X5</text>
<text x="968.5" y="511.1" font-size="11.5" font-weight="normal" font-family='"Liberation Serif","Noto Serif CJK SC",serif' fill="#b8babc" text-anchor="middle" >16</text>
<text x="1012.0" y="510.74" font-size="9" font-weight="bold" font-family='"Liberation Sans","Noto Sans CJK SC",sans-serif' fill="#ffffff" text-anchor="middle" textLength="23.2" lengthAdjust="spacingAndGlyphs" >污泥堆场</text>
<text x="1054.5" y="511.39" font-size="10.8" font-weight="bold" font-family='"Liberation Sans","Noto Sans CJK SC",sans-serif' fill="#ffffff" text-anchor="middle" textLength="8.8" lengthAdjust="spacingAndGlyphs" >1座</text>
<text x="1102.5" y="511.1" font-size="10" font-weight="bold" font-family='"Liberation Sans","Noto Sans CJK SC",sans-serif' fill="#ffffff" text-anchor="middle" textLength="32.2" lengthAdjust="spacingAndGlyphs" >2X5X6.1</text>
<text x="968.5" y="521.59" font-size="11.5" font-weight="normal" font-family='"Liberation Serif","Noto Serif CJK SC",serif' fill="#b8babc" text-anchor="middle" >17</text>
<text x="1012.0" y="521.24" font-size="9" font-weight="bold" font-family='"Liberation Sans","Noto Sans CJK SC",sans-serif' fill="#ffffff" text-anchor="middle" textLength="23.2" lengthAdjust="spacingAndGlyphs" >鼓风机房</text>
<text x="1054.5" y="521.89" font-size="10.8" font-weight="bold" font-family='"Liberation Sans","Noto Sans CJK SC",sans-serif' fill="#ffffff" text-anchor="middle" textLength="8.8" lengthAdjust="spacingAndGlyphs" >1座</text>
<text x="1102.5" y="521.6" font-size="10" font-weight="bold" font-family='"Liberation Sans","Noto Sans CJK SC",sans-serif' fill="#ffffff" text-anchor="middle" textLength="36.8" lengthAdjust="spacingAndGlyphs" >12X7X4.5</text>
<text x="968.5" y="532.09" font-size="11.5" font-weight="normal" font-family='"Liberation Serif","Noto Serif CJK SC",serif' fill="#b8babc" text-anchor="middle" >18</text>
<text x="1012.0" y="531.74" font-size="9" font-weight="bold" font-family='"Liberation Sans","Noto Sans CJK SC",sans-serif' fill="#ffffff" text-anchor="middle" textLength="17.4" lengthAdjust="spacingAndGlyphs" >配电室</text>
<text x="1054.5" y="532.39" font-size="10.8" font-weight="bold" font-family='"Liberation Sans","Noto Sans CJK SC",sans-serif' fill="#ffffff" text-anchor="middle" textLength="8.8" lengthAdjust="spacingAndGlyphs" >1座</text>
<text x="1102.5" y="532.1" font-size="10" font-weight="bold" font-family='"Liberation Sans","Noto Sans CJK SC",sans-serif' fill="#ffffff" text-anchor="middle" textLength="36.8" lengthAdjust="spacingAndGlyphs" >15X7X4.5</text>
<text x="968.5" y="543.09" font-size="11.5" font-weight="normal" font-family='"Liberation Serif","Noto Serif CJK SC",serif' fill="#b8babc" text-anchor="middle" >19</text>
<text x="1012.0" y="542.74" font-size="9" font-weight="bold" font-family='"Liberation Sans","Noto Sans CJK SC",sans-serif' fill="#ffffff" text-anchor="middle" textLength="17.4" lengthAdjust="spacingAndGlyphs" >化验室</text>
<text x="1054.5" y="543.39" font-size="10.8" font-weight="bold" font-family='"Liberation Sans","Noto Sans CJK SC",sans-serif' fill="#ffffff" text-anchor="middle" textLength="8.8" lengthAdjust="spacingAndGlyphs" >1座</text>
<text x="1102.5" y="543.1" font-size="10" font-weight="bold" font-family='"Liberation Sans","Noto Sans CJK SC",sans-serif' fill="#ffffff" text-anchor="middle" textLength="36.8" lengthAdjust="spacingAndGlyphs" >17X7X4.5</text>
<text x="968.5" y="553.59" font-size="11.5" font-weight="normal" font-family='"Liberation Serif","Noto Serif CJK SC",serif' fill="#b8babc" text-anchor="middle" >20</text>
<text x="1012.0" y="553.24" font-size="9" font-weight="bold" font-family='"Liberation Sans","Noto Sans CJK SC",sans-serif' fill="#ffffff" text-anchor="middle" textLength="11.6" lengthAdjust="spacingAndGlyphs" >仓库</text>
<text x="1054.5" y="553.89" font-size="10.8" font-weight="bold" font-family='"Liberation Sans","Noto Sans CJK SC",sans-serif' fill="#ffffff" text-anchor="middle" textLength="8.8" lengthAdjust="spacingAndGlyphs" >1座</text>
<text x="1102.5" y="553.6" font-size="10" font-weight="bold" font-family='"Liberation Sans","Noto Sans CJK SC",sans-serif' fill="#ffffff" text-anchor="middle" textLength="32.2" lengthAdjust="spacingAndGlyphs" >5X5X4.5</text>
<text x="968.5" y="564.09" font-size="11.5" font-weight="normal" font-family='"Liberation Serif","Noto Serif CJK SC",serif' fill="#b8babc" text-anchor="middle" >21</text>
<text x="1012.0" y="563.74" font-size="9" font-weight="bold" font-family='"Liberation Sans","Noto Sans CJK SC",sans-serif' fill="#ffffff" text-anchor="middle" textLength="11.6" lengthAdjust="spacingAndGlyphs" >门卫</text>
<text x="1054.5" y="564.39" font-size="10.8" font-weight="bold" font-family='"Liberation Sans","Noto Sans CJK SC",sans-serif' fill="#ffffff" text-anchor="middle" textLength="8.8" lengthAdjust="spacingAndGlyphs" >1座</text>
<text x="1102.5" y="564.1" font-size="10" font-weight="bold" font-family='"Liberation Sans","Noto Sans CJK SC",sans-serif' fill="#ffffff" text-anchor="middle" textLength="32.2" lengthAdjust="spacingAndGlyphs" >6X4X4.5</text>
<text x="948" y="600.27" font-size="13.8" font-weight="900" font-family='"Liberation Serif","Noto Serif CJK SC",serif' fill="#ffffff" text-anchor="start" textLength="246" lengthAdjust="spacingAndGlyphs" >注：本表中建、构筑物的尺寸按照内壁尺寸进行进</text>
<text x="948" y="617.77" font-size="13.8" font-weight="900" font-family='"Liberation Serif","Noto Serif CJK SC",serif' fill="#ffffff" text-anchor="start" textLength="123" lengthAdjust="spacingAndGlyphs" >行汇总，数据仅供参考。</text>
<text x="718.5" y="755.26" font-size="11" font-weight="900" font-family='"Liberation Sans","Noto Sans CJK SC",sans-serif' fill="#ffffff" text-anchor="start" textLength="50.6" lengthAdjust="spacingAndGlyphs" >图例：污水管线</text>
<text x="739.6" y="775.56" font-size="11" font-weight="900" font-family='"Liberation Sans","Noto Sans CJK SC",sans-serif' fill="#ffffff" text-anchor="start" textLength="29.5" lengthAdjust="spacingAndGlyphs" >污泥管线</text>
<text x="739.6" y="795.16" font-size="11" font-weight="900" font-family='"Liberation Sans","Noto Sans CJK SC",sans-serif' fill="#ffffff" text-anchor="start" textLength="29.5" lengthAdjust="spacingAndGlyphs" >输气管线</text>
<line x1="775" y1="749" x2="839" y2="749" stroke="#cc1e27" stroke-width="1.6" />
<path d="M775,769 H807" stroke="#1616aa" stroke-width="2" fill="none" stroke-opacity="0.28"/>
<path d="M775,769 H807" stroke="#1616aa" stroke-width="2" fill="none" stroke-dasharray="2.4,1.1"/>
<path d="M807,769 H839" stroke="#1616aa" stroke-width="2" fill="none"/>
<line x1="775" y1="788.8" x2="839" y2="788.8" stroke="#1cbd4e" stroke-width="1.6" />
<line x1="992.5" y1="867.5" x2="1280.5" y2="867.5" stroke="#f1f2f4" stroke-width="1" />
<line x1="992.5" y1="867.5" x2="992.5" y2="923" stroke="#f1f2f4" stroke-width="1" />
<line x1="1120.5" y1="878.5" x2="1280.5" y2="878.5" stroke="#f1f2f4" stroke-width="1" />
<line x1="992.5" y1="889.5" x2="1280.5" y2="889.5" stroke="#f1f2f4" stroke-width="1" />
<line x1="992.5" y1="900.5" x2="1120.5" y2="900.5" stroke="#f1f2f4" stroke-width="1" />
<line x1="1235.5" y1="900.5" x2="1280.5" y2="900.5" stroke="#f1f2f4" stroke-width="1" />
<line x1="992.5" y1="911.5" x2="1120.5" y2="911.5" stroke="#f1f2f4" stroke-width="1" />
<line x1="1235.5" y1="911.5" x2="1280.5" y2="911.5" stroke="#f1f2f4" stroke-width="1" />
<line x1="1012.5" y1="889.5" x2="1012.5" y2="923" stroke="#f1f2f4" stroke-width="1" />
<line x1="1053.5" y1="889.5" x2="1053.5" y2="923" stroke="#f1f2f4" stroke-width="1" />
<line x1="1075.5" y1="889.5" x2="1075.5" y2="923" stroke="#f1f2f4" stroke-width="1" />
<line x1="1235.5" y1="889.5" x2="1235.5" y2="923" stroke="#f1f2f4" stroke-width="1" />
<line x1="1254.5" y1="889.5" x2="1254.5" y2="923" stroke="#f1f2f4" stroke-width="1" />
<line x1="1120.5" y1="867.5" x2="1120.5" y2="923" stroke="#f1f2f4" stroke-width="1" />
<line x1="1157.5" y1="867.5" x2="1157.5" y2="889.5" stroke="#f1f2f4" stroke-width="1" />
<rect x="995" y="892" width="14" height="5" fill="#fff"/>
<rect x="1055" y="892" width="18" height="5" fill="#fff"/>
<rect x="995" y="914" width="14" height="5" fill="#fff"/>
<rect x="1055" y="914" width="18" height="5" fill="#fff"/>
<rect x="1258.9" y="903.2" width="14.1" height="4.5" fill="#fff"/>
<text x="995" y="909.96" font-size="6" font-weight="bold" font-family='"Liberation Sans","Noto Sans CJK SC",sans-serif' fill="#ffffff" text-anchor="start" textLength="14" lengthAdjust="spacingAndGlyphs" >班 级</text>
<text x="1055.1" y="909.96" font-size="6" font-weight="bold" font-family='"Liberation Sans","Noto Sans CJK SC",sans-serif' fill="#ffffff" text-anchor="start" textLength="18.2" lengthAdjust="spacingAndGlyphs" >指导教师</text>
<text x="1125" y="875.77" font-size="8.8" font-weight="900" font-family='"Liberation Sans","Noto Sans CJK SC",sans-serif' fill="#ffffff" text-anchor="start" textLength="7.3" lengthAdjust="spacingAndGlyphs" >学</text>
<text x="1144.7" y="875.77" font-size="8.8" font-weight="900" font-family='"Liberation Sans","Noto Sans CJK SC",sans-serif' fill="#ffffff" text-anchor="start" textLength="7.3" lengthAdjust="spacingAndGlyphs" >院</text>
<text x="1125" y="886.77" font-size="8.8" font-weight="900" font-family='"Liberation Sans","Noto Sans CJK SC",sans-serif' fill="#ffffff" text-anchor="start" textLength="7.3" lengthAdjust="spacingAndGlyphs" >题</text>
<text x="1144.7" y="886.77" font-size="8.8" font-weight="900" font-family='"Liberation Sans","Noto Sans CJK SC",sans-serif' fill="#ffffff" text-anchor="start" textLength="7.3" lengthAdjust="spacingAndGlyphs" >名</text>
<text x="1166.9" y="888.15" font-size="9.3" font-weight="bold" font-family='"Liberation Sans","Noto Sans CJK SC",sans-serif' fill="#ffffff" text-anchor="start" textLength="105.8" lengthAdjust="spacingAndGlyphs" >济南某纺织染整废水处理工程设计</text>
<text x="1125" y="900.15" font-size="9.3" font-weight="900" font-family='"Liberation Sans","Noto Sans CJK SC",sans-serif' fill="#ffffff" text-anchor="start" textLength="73.7" lengthAdjust="spacingAndGlyphs" >图纸内容：平面管线布置</text>
<text x="1237" y="898.26" font-size="6" font-weight="bold" font-family='"Liberation Sans","Noto Sans CJK SC",sans-serif' fill="#ffffff" text-anchor="start" textLength="14.3" lengthAdjust="spacingAndGlyphs" >图 号</text>
<text x="1237" y="908.56" font-size="6" font-weight="bold" font-family='"Liberation Sans","Noto Sans CJK SC",sans-serif' fill="#ffffff" text-anchor="start" textLength="14.3" lengthAdjust="spacingAndGlyphs" >比 例</text>
<text x="1237" y="919.16" font-size="6" font-weight="bold" font-family='"Liberation Sans","Noto Sans CJK SC",sans-serif' fill="#ffffff" text-anchor="start" textLength="14.3" lengthAdjust="spacingAndGlyphs" >日 期</text>
<text x="1266" y="897.98" font-size="5.5" font-weight="bold" font-family='"Liberation Sans","Noto Sans CJK SC",sans-serif' fill="#ffffff" text-anchor="middle" >1</text>
<circle cx="719.6" cy="248.9" r="7.9" stroke="#f1f2f4" stroke-width="1.1" fill="none"/>
<circle cx="719.6" cy="248.9" r="5.3" stroke="#f1f2f4" stroke-width="1.1" fill="none"/>
<rect x="516.8" y="209.1" width="1.8" height="1.8" fill="#fff"/>
<rect x="516.8" y="243.3" width="1.8" height="1.8" fill="#fff"/>
<rect x="516.1" y="387.4" width="1.8" height="1.8" fill="#fff"/>
<rect x="452.1" y="446.0" width="1.8" height="1.8" fill="#fff"/>
<rect x="293.9" y="306.1" width="1.8" height="1.8" fill="#fff"/>
<rect x="462.4" y="437.6" width="1.8" height="1.8" fill="#fff"/>
<rect x="486.9" y="437.6" width="1.8" height="1.8" fill="#fff"/>
<rect x="718.9" y="360.3" width="1.8" height="1.8" fill="#fff"/>
<rect x="708.6" y="491.1" width="1.8" height="1.8" fill="#fff"/>
<rect x="738.6" y="491.1" width="1.8" height="1.8" fill="#fff"/>
<rect x="719.0" y="258.0" width="1.8" height="1.8" fill="#fff"/>
<rect x="233.0" y="599.3" width="1.8" height="1.8" fill="#fff"/>
<rect x="685.9" y="215.7" width="1.8" height="1.8" fill="#fff"/>
<rect x="683.1" y="216.4" width="1.8" height="1.8" fill="#fff"/>
<rect x="751.4" y="215.3" width="1.8" height="1.8" fill="#fff"/>
<rect x="754.6" y="215.7" width="1.8" height="1.8" fill="#fff"/>
<rect x="687.4" y="279.6" width="1.8" height="1.8" fill="#fff"/>
<rect x="750.5" y="279.3" width="1.8" height="1.8" fill="#fff"/>
<rect x="681.5" y="285.7" width="1.8" height="1.8" fill="#fff"/>
<rect x="756.6" y="286.0" width="1.8" height="1.8" fill="#fff"/>
<rect x="374.4" y="622.3" width="1.8" height="1.8" fill="#fff"/>
<rect x="374.4" y="640.3" width="1.8" height="1.8" fill="#fff"/>
<rect x="506.1" y="622.3" width="1.8" height="1.8" fill="#fff"/>
<rect x="506.1" y="640.3" width="1.8" height="1.8" fill="#fff"/>
<rect x="534.4" y="618.3" width="1.8" height="1.8" fill="#fff"/>
<rect x="534.4" y="638.4" width="1.8" height="1.8" fill="#fff"/>
<rect x="588.0" y="585.2" width="1.8" height="1.8" fill="#fff"/>
<rect x="588.0" y="672.6" width="1.8" height="1.8" fill="#fff"/>
<rect x="608.7" y="606.6" width="1.8" height="1.8" fill="#fff"/>
<rect x="608.7" y="650.6" width="1.8" height="1.8" fill="#fff"/>
</svg>
<div id="hdr"><span style="left:496px;letter-spacing:0.3px">Autodesk AutoCAD</span><span style="left:655px">平面管线图.dwg</span></div>
</body></html>
